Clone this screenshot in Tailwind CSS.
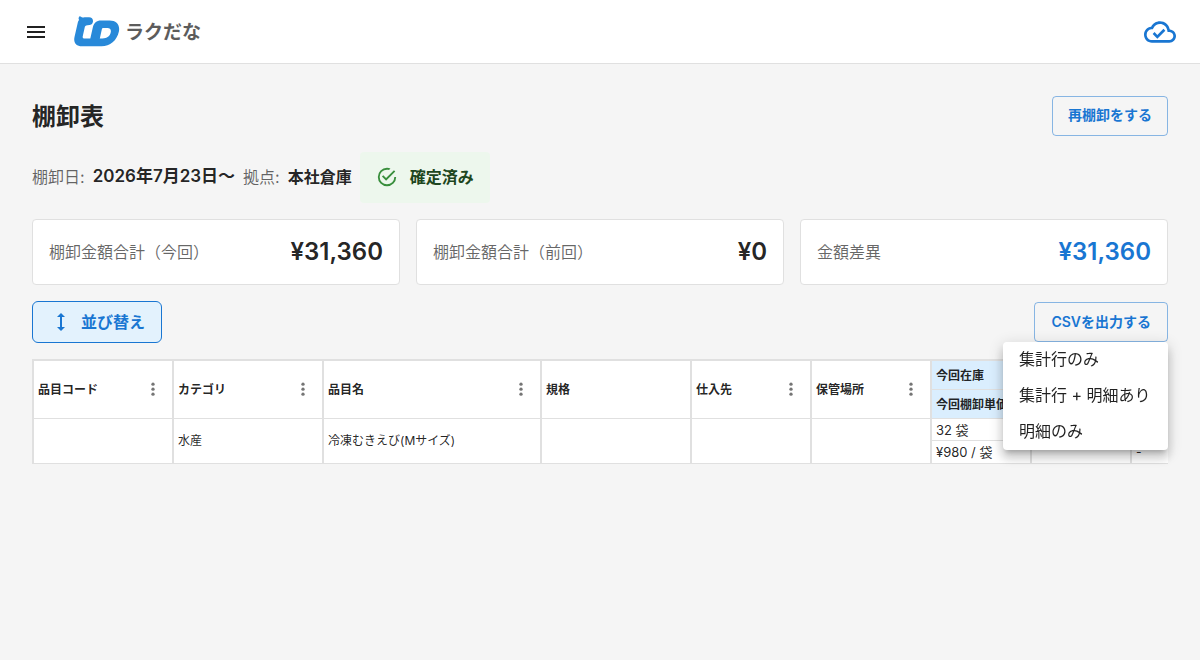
<!DOCTYPE html>
<html lang="ja">
  <head>
    <meta charset="UTF-8" />
    <meta name="viewport" content="width=device-width, initial-scale=1.0" />
    <title>棚卸表 - ラクだな</title>
    <script src="https://cdn.jsdelivr.net/npm/@tailwindcss/browser@4"></script>
  </head>
  <body class="min-h-screen bg-[#f5f5f5] font-[Inter,'Noto_Sans_CJK_JP',sans-serif] text-base text-black/87">
    <!-- Header -->
    <header class="flex h-16 items-center justify-between border-b border-[#e0e0e0] bg-white px-6">
      <div class="flex items-center gap-6">
        <button type="button" aria-label="メニュー">
          <svg class="size-6" viewBox="0 0 24 24" fill="currentColor">
            <path d="M3 18h18v-2H3zm0-5h18v-2H3zm0-7v2h18V6z" />
          </svg>
        </button>
        <a href="#" class="flex items-center gap-[5px]">
          <svg class="h-8 w-12" viewBox="0 0 48 32" fill="#2889d9">
            <path
              fill-rule="evenodd"
              d="M7 1C7.200 0 8.300 0 9 .8C9.800 1.700 11 1.600 12.500 1.200H17C19.800 1.300 21.200 3 21 5.400C20.800 8 18.500 9.200 15.500 9.300C13.500 9.400 12.900 10.300 12.600 12L10.800 20C10.400 21.700 11 22.400 12.300 22.400H18.300L20.800 11.500C21.900 6.800 24.500 4.500 29 4.500H37.500C44.500 4.500 48.200 9 46.900 15.500C45 24.500 38 30.300 29.500 30.300H10C4 30.300 1.300 26.500 2.500 21L5.700 7C6 5.600 6.300 4.800 7.200 4C6.300 3 6.500 1.800 7 1ZM31.500 12C30.600 12 30 12.500 29.800 13.400L27.800 22.400H30.500C35 22.400 38 20 38.700 16.500C39.400 13.500 38 12 35.500 12Z"
            />
          </svg>
          <span class="pt-0.5 text-[19px] leading-8 font-bold text-[#5c5c5c]">ラクだな</span>
        </a>
      </div>
      <button type="button" aria-label="同期済み" class="text-[#1976d2]">
        <svg class="size-8" viewBox="0 0 24 24" fill="currentColor">
          <path
            d="M19.350 10.040C18.670 6.590 15.640 4 12 4 9.110 4 6.600 5.640 5.350 8.040 2.340 8.360 0 10.910 0 14c0 3.310 2.690 6 6 6h13c2.760 0 5-2.240 5-5 0-2.640-2.050-4.780-4.650-4.960M19 18H6c-2.210 0-4-1.790-4-4 0-2.050 1.530-3.760 3.560-3.970l1.070-.11.5-.95C8.080 7.140 9.940 6 12 6c2.620 0 4.880 1.860 5.390 4.430l.3 1.500 1.530.11c1.560.1 2.780 1.410 2.780 2.960 0 1.650-1.350 3-3 3m-9-3.820-2.090-2.090L6.500 13.500 10 17l6.010-6.010-1.410-1.410z"
          />
        </svg>
      </button>
    </header>

    <!-- Main Content -->
    <main class="flex flex-col gap-4 p-8">
      <div class="flex h-10 items-center justify-between">
        <h1 class="pt-0.5 text-2xl font-bold">棚卸表</h1>
        <button type="button" class="h-10 rounded border border-[#1976d2]/50 px-[15px] pb-0.5 text-sm font-semibold text-[#1976d2]">
          再棚卸をする
        </button>
      </div>

      <div class="flex h-[51px] items-center gap-2">
        <span class="pb-0.5 text-black/60">棚卸日:</span>
        <span class="pb-0.5 text-[17px] font-semibold">2026年7月23日〜</span>
        <span class="pb-0.5 text-black/60">拠点:</span>
        <span class="pb-0.5 font-semibold">本社倉庫</span>
        <div class="flex h-full items-center gap-3 rounded bg-[#edf7ed] px-4 pb-0.5 font-semibold text-[#1e4620]">
          <svg class="size-[22px]" viewBox="0 0 24 24" fill="#388e3c">
            <path
              d="M20 12a8 8 0 0 1-8 8 8 8 0 0 1-8-8 8 8 0 0 1 8-8c.76 0 1.500.11 2.200.31l1.570-1.570A9.822 9.822 0 0 0 12 2 10 10 0 0 0 2 12a10 10 0 0 0 10 10 10 10 0 0 0 10-10M7.910 10.080 6.500 11.500 11 16 21 6l-1.410-1.420L11 13.170z"
            />
          </svg>
          確定済み
        </div>
      </div>

      <!-- Totals -->
      <div class="grid grid-cols-3 gap-4">
        <div class="flex items-center justify-between rounded border border-[#e0e0e0] bg-white p-4">
          <span class="text-black/60">棚卸金額合計（今回）</span>
          <span class="text-2xl font-semibold">¥31,360</span>
        </div>
        <div class="flex items-center justify-between rounded border border-[#e0e0e0] bg-white p-4">
          <span class="text-black/60">棚卸金額合計（前回）</span>
          <span class="text-2xl font-semibold">¥0</span>
        </div>
        <div class="flex items-center justify-between rounded border border-[#e0e0e0] bg-white p-4">
          <span class="text-black/60">金額差異</span>
          <span class="text-2xl font-semibold text-[#1976d2]">¥31,360</span>
        </div>
      </div>

      <div class="flex items-center justify-between">
        <button type="button" class="flex h-[42px] items-center gap-2 rounded-md border border-[#1976d2] bg-[#e3f2fd] px-4 font-semibold text-[#1976d2]">
          <svg class="size-6" viewBox="0 0 24 24" fill="currentColor">
            <path d="M13 6.990h3L12 3 8 6.990h3v10.020H8L12 21l4-3.990h-3z" />
          </svg>
          並び替え
        </button>
        <div class="relative">
          <button type="button" aria-haspopup="menu" aria-expanded="true" class="block h-10 rounded border border-[#1976d2]/50 px-4 text-sm font-semibold text-[#1976d2]">
            CSVを出力する
          </button>
          <!-- Export menu -->
          <ul role="menu" class="absolute top-full right-0 z-10 min-w-[165px] rounded bg-white shadow-[0_5px_5px_-3px_rgba(0,0,0,0.2),0_8px_10px_1px_rgba(0,0,0,0.14),0_3px_14px_2px_rgba(0,0,0,0.12)]">
            <li role="none"><button type="button" role="menuitem" class="block h-9 w-full px-4 pb-0.5 text-left whitespace-nowrap">集計行のみ</button></li>
            <li role="none"><button type="button" role="menuitem" class="block h-9 w-full px-4 pb-0.5 text-left whitespace-nowrap">集計行 + 明細あり</button></li>
            <li role="none"><button type="button" role="menuitem" class="block h-9 w-full px-4 pb-0.5 text-left whitespace-nowrap">明細のみ</button></li>
          </ul>
        </div>
      </div>

      <!-- Inventory table -->
      <div class="overflow-x-auto [scrollbar-width:none]">
        <table class="w-[1198px] table-fixed border-separate border-spacing-0 border-t-2 border-[#e0e0e0] bg-white text-left text-xs [&_td]:border-b [&_td]:border-l-2 [&_td]:border-[#e0e0e0] [&_td]:px-1 [&_td]:py-0 [&_th]:border-b [&_th]:border-l-2 [&_th]:border-[#e0e0e0] [&_th]:px-1 [&_th]:py-0">
          <colgroup>
            <col class="w-[140px]" />
            <col class="w-[150px]" />
            <col class="w-[218px]" />
            <col class="w-[150px]" />
            <col class="w-[120px]" />
            <col class="w-[120px]" />
            <col class="w-[100px]" />
            <col class="w-[100px]" />
            <col class="w-[100px]" />
          </colgroup>
          <thead>
            <tr class="h-[29px]">
              <th rowspan="2">
                <div class="flex items-center justify-between">
                  品目コード
                  <button type="button" aria-label="品目コードの操作" class="p-[5px] text-black/54">
                    <svg class="size-5" viewBox="0 0 24 24" fill="currentColor"><circle cx="12" cy="5" r="2" /><circle cx="12" cy="11" r="2" /><circle cx="12" cy="17" r="2" /></svg>
                  </button>
                </div>
              </th>
              <th rowspan="2">
                <div class="flex items-center justify-between">
                  カテゴリ
                  <button type="button" aria-label="カテゴリの操作" class="p-[5px] text-black/54">
                    <svg class="size-5" viewBox="0 0 24 24" fill="currentColor"><circle cx="12" cy="5" r="2" /><circle cx="12" cy="11" r="2" /><circle cx="12" cy="17" r="2" /></svg>
                  </button>
                </div>
              </th>
              <th rowspan="2">
                <div class="flex items-center justify-between">
                  品目名
                  <button type="button" aria-label="品目名の操作" class="p-[5px] text-black/54">
                    <svg class="size-5" viewBox="0 0 24 24" fill="currentColor"><circle cx="12" cy="5" r="2" /><circle cx="12" cy="11" r="2" /><circle cx="12" cy="17" r="2" /></svg>
                  </button>
                </div>
              </th>
              <th rowspan="2">規格</th>
              <th rowspan="2">
                <div class="flex items-center justify-between">
                  仕入先
                  <button type="button" aria-label="仕入先の操作" class="p-[5px] text-black/54">
                    <svg class="size-5" viewBox="0 0 24 24" fill="currentColor"><circle cx="12" cy="5" r="2" /><circle cx="12" cy="11" r="2" /><circle cx="12" cy="17" r="2" /></svg>
                  </button>
                </div>
              </th>
              <th rowspan="2">
                <div class="flex items-center justify-between">
                  保管場所
                  <button type="button" aria-label="保管場所の操作" class="p-[5px] text-black/54">
                    <svg class="size-5" viewBox="0 0 24 24" fill="currentColor"><circle cx="12" cy="5" r="2" /><circle cx="12" cy="11" r="2" /><circle cx="12" cy="17" r="2" /></svg>
                  </button>
                </div>
              </th>
              <th class="bg-[#daeefe]"><div class="pt-0.5">今回在庫</div></th>
              <th></th>
              <th></th>
            </tr>
            <tr class="h-[29px]">
              <th class="bg-[#daeefe] whitespace-nowrap"><div class="pt-0.5">今回棚卸単価</div></th>
              <th></th>
              <th></th>
            </tr>
          </thead>
          <tbody>
            <tr class="h-[22px]">
              <td rowspan="2"></td>
              <td rowspan="2">水産</td>
              <td rowspan="2">冷凍むきえび(Mサイズ)</td>
              <td rowspan="2"></td>
              <td rowspan="2"></td>
              <td rowspan="2"></td>
              <td class="text-[13px] leading-4">32 袋</td>
              <td></td>
              <td></td>
            </tr>
            <tr class="h-[23px]">
              <td class="text-[13px] leading-4">¥980 / 袋</td>
              <td></td>
              <td>-</td>
            </tr>
          </tbody>
        </table>
      </div>
    </main>
  </body>
</html>
